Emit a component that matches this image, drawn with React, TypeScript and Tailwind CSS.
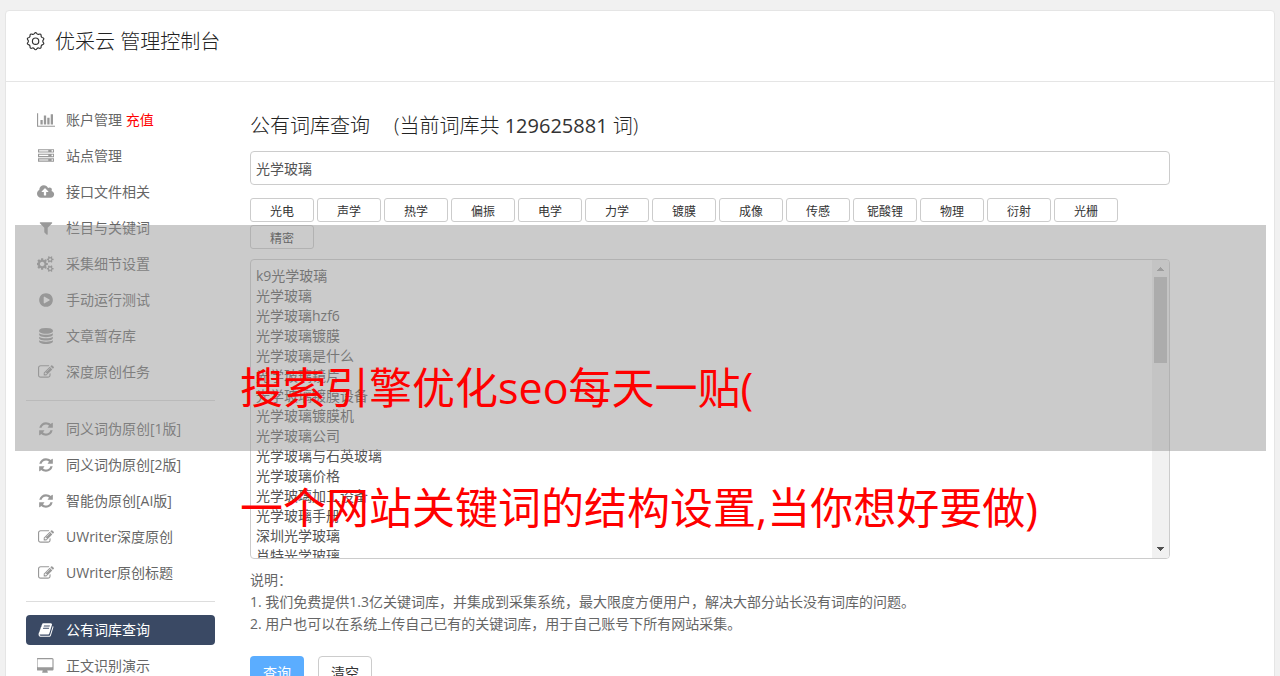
import React from 'react';

type IconDef = { w: number; d: string };

const icons: Record<string, IconDef> = {
  chart: { w: 2048, d: 'M640 896v512h-256v-512h256zm384-512v1024h-256v-1024h256zm1024 1152v128h-2048v-1536h128v1408h1920zm-640-896v768h-256v-768h256zm384-384v1152h-256v-1152h256z' },
  server: { w: 1792, d: 'M128 1408h1024v-128h-1024v128zm0-512h1024v-128h-1024v128zm1568 448q0-40-28-68t-68-28-68 28-28 68 28 68 68 28 68-28 28-68zm-1568-960h1024v-128h-1024v128zm1568 448q0-40-28-68t-68-28-68 28-28 68 28 68 68 28 68-28 28-68zm0-512q0-40-28-68t-68-28-68 28-28 68 28 68 68 28 68-28 28-68zm96 832v384h-1792v-384h1792zm0-512v384h-1792v-384h1792zm0-512v384h-1792v-384h1792z' },
  cloud: { w: 1920, d: 'M1280 864q0-14-9-23l-352-352q-9-9-23-9t-23 9l-351 351q-10 12-10 24 0 14 9 23t23 9h224v352q0 13 9.5 22.5t22.5 9.5h192q13 0 22.5-9.5t9.5-22.5v-352h224q13 0 22.5-9.5t9.5-22.5zm640 288q0 159-112.5 271.5t-271.5 112.5h-1088q-185 0-316.5-131.5t-131.5-316.5q0-130 70-240t188-165q-2-30-2-43 0-212 150-362t362-150q156 0 285.5 87t188.5 231q71-62 166-62 106 0 181 75t75 181q0 76-41 138 130 31 213.5 135.5t83.5 238.5z' },
  filter: { w: 1792, d: 'M1595 295q17 41-14 70l-493 493v742q0 42-39 59-13 5-25 5-27 0-45-19l-256-256q-19-19-19-45v-486l-493-493q-31-29-14-70 17-39 59-39h1280q42 0 59 39z' },
  cogs: { w: 1920, d: 'M832 896q0-106-75-181t-181-75-181 75-75 181 75 181 181 75 181-75 75-181zm768 512q0-52-38-90t-90-38-90 38-38 90q0 53 37.5 90.5t90.5 37.5 90.5-37.5 37.5-90.5zm0-1024q0-52-38-90t-90-38-90 38-38 90q0 53 37.5 90.5t90.5 37.5 90.5-37.5 37.5-90.5zm-384 421v185q0 10-7 19.5t-16 10.5l-155 24q-11 35-32 76 34 48 90 115 7 11 7 20 0 12-7 19-23 30-82.5 89.5t-78.5 59.5q-11 0-21-7l-115-90q-37 19-77 31-11 108-23 155-7 24-30 24h-186q-11 0-20-7.5t-10-17.5l-23-153q-34-10-75-31l-118 89q-7 7-20 7-11 0-21-8-144-133-144-160 0-9 7-19 10-14 41-53t47-61q-23-44-35-82l-152-24q-10-1-17-9.5t-7-19.5v-185q0-10 7-19.5t16-10.5l155-24q11-35 32-76-34-48-90-115-7-11-7-20 0-12 7-20 22-30 82-89t79-59q11 0 21 7l115 90q34-18 77-32 11-108 23-154 7-24 30-24h186q11 0 20 7.5t10 17.5l23 153q34 10 75 31l118-89q8-7 20-7 11 0 21 8 144 133 144 160 0 8-7 19-12 16-42 54t-45 60q23 48 34 82l152 23q10 2 17 10.5t7 19.5zm640 533v140q0 16-149 31-12 27-30 52 51 113 51 138 0 4-4 7-122 71-124 71-8 0-46-47t-52-68q-20 2-30 2t-30-2q-14 21-52 68t-46 47q-2 0-124-71-4-3-4-7 0-25 51-138-18-25-30-52-149-15-149-31v-140q0-16 149-31 13-29 30-52-51-113-51-138 0-4 4-7 4-2 35-20t59-34 30-16q8 0 46 46.5t52 67.5q20-2 30-2t30 2q51-71 92-112l6-2q4 0 124 70 4 3 4 7 0 25-51 138 17 23 30 52 149 15 149 31zm0-1024v140q0 16-149 31-12 27-30 52 51 113 51 138 0 4-4 7-122 71-124 71-8 0-46-47t-52-68q-20 2-30 2t-30-2q-14 21-52 68t-46 47q-2 0-124-71-4-3-4-7 0-25 51-138-18-25-30-52-149-15-149-31v-140q0-16 149-31 13-29 30-52-51-113-51-138 0-4 4-7 4-2 35-20t59-34 30-16q8 0 46 46.5t52 67.5q20-2 30-2t30 2q51-71 92-112l6-2q4 0 124 70 4 3 4 7 0 25-51 138 17 23 30 52 149 15 149 31z' },
  play: { w: 1792, d: 'M1312 896q0 37-32 55l-544 320q-15 9-32 9-16 0-32-8-32-19-32-56v-640q0-37 32-56 33-18 64 1l544 320q32 18 32 55zm352 0q0-209-103-385.5t-279.5-279.5-385.5-103-385.5 103-279.5 279.5-103 385.5 103 385.5 279.5 279.5 385.5 103 385.5-103 279.5-279.5 103-385.5z' },
  database: { w: 1792, d: 'M896 768q237 0 443-43t325-127v170q0 69-103 128t-280 93.5-385 34.5-385-34.5-280-93.5-103-128v-170q119 84 325 127t443 43zm0 768q237 0 443-43t325-127v170q0 69-103 128t-280 93.5-385 34.5-385-34.5-280-93.5-103-128v-170q119 84 325 127t443 43zm0-384q237 0 443-43t325-127v170q0 69-103 128t-280 93.5-385 34.5-385-34.5-280-93.5-103-128v-170q119 84 325 127t443 43zm0-1152q208 0 385 34.5t280 93.5 103 128v128q0 69-103 128t-280 93.5-385 34.5-385-34.5-280-93.5-103-128v-128q0-69 103-128t280-93.5 385-34.5z' },
  edit: { w: 1792, d: 'M888 1184l116-116-152-152-116 116v56h96v96h56zm440-720q-16-16-33 1l-350 350q-17 17-1 33t33-1l350-350q17-17 1-33zm80 594v190q0 119-84.5 203.5t-203.5 84.5h-832q-119 0-203.5-84.5t-84.5-203.5v-832q0-119 84.5-203.5t203.5-84.5h832q63 0 117 25 15 7 18 23 3 17-9 29l-49 49q-14 14-32 8-23-6-45-6h-832q-66 0-113 47t-47 113v832q0 66 47 113t113 47h832q66 0 113-47t47-113v-126q0-13 9-22l64-64q15-15 35-7t20 29zm-96-738l288 288-672 672h-288v-288zm444 132l-92 92-288-288 92-92q28-28 68-28t68 28l152 152q28 28 28 68t-28 68z' },
  refresh: { w: 1792, d: 'M1639 1056q0 5-1 7-64 268-268 434.5t-478 166.5q-146 0-282.5-55t-243.5-157l-129 129q-19 19-45 19t-45-19-19-45v-448q0-26 19-45t45-19h448q26 0 45 19t19 45-19 45l-137 137q71 66 161 102t187 36q134 0 250-65t186-179q11-17 53-117 8-23 30-23h192q13 0 22.5 9.5t9.5 22.5zm25-800v448q0 26-19 45t-45 19h-448q-26 0-45-19t-19-45 19-45l138-138q-148-137-349-137-134 0-250 65t-186 179q-11 17-53 117-8 23-30 23h-199q-13 0-22.5-9.5t-9.5-22.5v-7q65-268 270-434.5t480-166.5q146 0 284 55.5t245 156.5l130-129q19-19 45-19t45 19 19 45z' },
  book: { w: 1792, d: 'M1703 478q40 57 18 129l-275 906q-19 64-76.5 107.5t-122.5 43.5h-923q-77 0-148.5-53.5t-99.5-131.5q-24-67-2-127 0-4 3-27t4-37q1-8-3-21.5t-3-19.5q2-11 8-21t16.5-23.5 16.5-23.5q23-38 45-91.5t30-91.5q3-10 .5-30t-.5-28q3-11 17-28t17-23q21-36 42-92t25-90q1-9-2.5-32t.5-28q4-13 22-30.5t22-22.5q19-26 42.5-84.5t27.5-96.5q1-8-3-25.5t-2-26.5q2-8 9-18t18-23 17-21q8-12 16.5-30.5t15-35 16-36 19.5-32 26.5-23.5 36-11.5 47.5 5.5l-1 3q38-9 51-9h761q74 0 114 56t18 130l-274 906q-36 119-71.5 153.5t-128.5 34.5h-869q-27 0-38 15-11 16-1 43 24 70 144 70h923q29 0 56-15.5t35-41.5l300-987q7-22 5-57 38 15 59 43zm-1064 2q-4 13 2 22.5t20 9.5h608q13 0 25.5-9.5t16.5-22.5l21-64q4-13-2-22.5t-20-9.5h-608q-13 0-25.5 9.5t-16.5 22.5zm-83 256q-4 13 2 22.5t20 9.5h608q13 0 25.5-9.5t16.5-22.5l21-64q4-13-2-22.5t-20-9.5h-608q-13 0-25.5 9.5t-16.5 22.5z' },
  desktop: { w: 1920, d: 'M1728 992v-832q0-13-9.5-22.5t-22.5-9.5h-1600q-13 0-22.5 9.5t-9.5 22.5v832q0 13 9.5 22.5t22.5 9.5h1600q13 0 22.5-9.5t9.5-22.5zm128-832v1088q0 66-47 113t-113 47h-544q0 37 16 77.5t32 71 16 43.5q0 26-19 45t-45 19h-512q-26 0-45-19t-19-45q0-14 16-44t32-70 16-78h-544q-66 0-113-47t-47-113v-1088q0-66 47-113t113-47h1600q66 0 113 47t47 113z' },
};

function Icon({ name }: { name: string }) {
  const icon = icons[name];
  return (
    <span className="flex w-5 shrink-0 justify-center">
      <svg viewBox={`0 0 ${icon.w} 1792`} className="h-4 w-auto" fill="currentColor" aria-hidden="true">
        <path d={icon.d} />
      </svg>
    </span>
  );
}

type Item = { icon: string; label: string; extra?: string; active?: boolean };

const groups: Item[][] = [
  [
    { icon: 'chart', label: '账户管理', extra: '充值' },
    { icon: 'server', label: '站点管理' },
    { icon: 'cloud', label: '接口文件相关' },
    { icon: 'filter', label: '栏目与关键词' },
    { icon: 'cogs', label: '采集细节设置' },
    { icon: 'play', label: '手动运行测试' },
    { icon: 'database', label: '文章暂存库' },
    { icon: 'edit', label: '深度原创任务' },
  ],
  [
    { icon: 'refresh', label: '同义词伪原创[1版]' },
    { icon: 'refresh', label: '同义词伪原创[2版]' },
    { icon: 'refresh', label: '智能伪原创[AI版]' },
    { icon: 'edit', label: 'UWriter深度原创' },
    { icon: 'edit', label: 'UWriter原创标题' },
  ],
  [
    { icon: 'book', label: '公有词库查询', active: true },
    { icon: 'desktop', label: '正文识别演示' },
  ],
];

const tags = ['光电', '声学', '热学', '偏振', '电学', '力学', '镀膜', '成像', '传感', '铌酸锂', '物理', '衍射', '光栅', '精密'];

const results = [
  'k9光学玻璃', '光学玻璃', '光学玻璃hzf6', '光学玻璃镀膜', '光学玻璃是什么', '光学玻璃镜片', '光学玻璃镀膜设备',
  '光学玻璃镀膜机', '光学玻璃公司', '光学玻璃与石英玻璃', '光学玻璃价格', '光学玻璃加工设备', '光学玻璃手册',
  '深圳光学玻璃', '肖特光学玻璃',
].join('\n');

function GearIcon() {
  const points: string[] = [];
  for (let i = 0; i < 10; i++) {
    const a = (i * Math.PI) / 5 - Math.PI / 2;
    const at = (r: number, t: number) => `${(11.5 + r * Math.cos(t)).toFixed(2)} ${(11 + r * Math.sin(t)).toFixed(2)}`;
    points.push(`${i ? 'L' : 'M'}${at(9, a - 0.2)}Q${at(11.8, a)} ${at(9, a + 0.2)}Q${at(8.4, a + 0.314)} ${at(9, a + 0.428)}`);
  }
  return (
    <svg viewBox="0 0 24 24" className="size-5" fill="none" stroke="currentColor" strokeWidth="1.4" aria-hidden="true">
      <path d={points.join('') + 'Z'} />
      <circle cx="11.5" cy="11" r="3.8" />
    </svg>
  );
}

function Sidebar() {
  return (
    <nav className="w-[189px] shrink-0">
      {groups.map((group, g) => (
        <ul key={g} className={g ? 'mt-[13px] flex flex-col gap-1.5 border-t border-[#ddd] pt-[13px]' : 'flex flex-col gap-1.5'}>
          {group.map((item) => (
            <li key={item.label}>
              <a
                href="#"
                className={
                  item.active
                    ? 'flex h-[30px] items-center gap-2.5 rounded bg-[#3a4964] px-2.5 text-white'
                    : 'flex h-[30px] items-center gap-2.5 px-2.5 text-[#999]'
                }
              >
                <Icon name={item.icon} />
                <span className={item.active ? 'text-white' : 'text-[#666]'}>
                  {item.label}
                  {item.extra && <span className="text-[#f00]"> {item.extra}</span>}
                </span>
              </a>
            </li>
          ))}
        </ul>
      ))}
    </nav>
  );
}

function ResultBox() {
  return (
    <div className="mt-2.5 flex h-[300px] overflow-hidden rounded border border-[#ccc]">
      <textarea
        aria-label="查询结果"
        className="block flex-1 resize-none overflow-hidden px-[5px] py-1.5 leading-5 text-[#555] outline-none"
        defaultValue={results}
      />
      <div className="flex w-[17px] flex-col items-center justify-between bg-[#f1f1f1]" aria-hidden="true">
        <div className="flex flex-col items-center">
          <svg viewBox="0 0 17 17" className="size-[17px]" fill="#a3a3a3">
            <path d="M8 7h1v1h1v1h1v1h1v1H5v-1h1V9h1V8h1z" />
          </svg>
          <div className="h-[86px] w-[13px] bg-[#c1c1c1]" />
        </div>
        <svg viewBox="0 0 17 17" className="size-[17px]" fill="#505050">
          <path d="M5 6h7v1h-1v1h-1v1H9v1H8V9H7V8H6V7H5z" />
        </svg>
      </div>
    </div>
  );
}

export default function App() {
  return (
    <div className="relative h-screen overflow-hidden bg-[#f1f1f1] px-[5px] pt-2.5 font-['Open_Sans','Noto_Sans_CJK_SC',sans-serif] text-sm text-[#666]">
      <div className="rounded border border-[#e5e5e5] bg-white">
        <header className="flex h-[71px] items-center gap-[9px] border-b border-[#e5e5e5] px-5 pb-2 text-[#333]">
          <GearIcon />
          <h1 className="text-xl font-light text-[#222]">优采云 管理控制台</h1>
        </header>
        <div className="flex gap-[35px] px-5 pt-[23px]">
          <Sidebar />
          <main className="min-w-0 flex-1 pr-[84px]">
            <h2 className="flex h-[46px] items-center gap-6 pb-1 text-xl font-light text-[#222]">
              <span>公有词库查询</span>
              <span>
                (当前词库共 <span className="font-normal text-[#333]">129625881</span> 词)
              </span>
            </h2>
            <input
              aria-label="关键词"
              className="block h-[34px] w-full rounded border border-[#ccc] px-[5px] text-[#555] outline-none"
              defaultValue="光学玻璃"
            />
            <div className="mt-[13px] flex flex-wrap gap-[3px]">
              {tags.map((tag) => (
                <button key={tag} type="button" className="h-6 w-16 rounded-[3px] border border-[#ccc] pt-1 text-xs leading-4 text-[#333]">
                  {tag}
                </button>
              ))}
            </div>
            <ResultBox />
            <div className="mt-2.5 leading-[22px]">
              <p>说明：</p>
              <p>1. 我们免费提供1.3亿关键词库，并集成到采集系统，最大限度方便用户，解决大部分站长没有词库的问题。</p>
              <p>2. 用户也可以在系统上传自己已有的关键词库，用于自己账号下所有网站采集。</p>
            </div>
            <div className="mt-[21px] flex gap-3.5">
              <button type="button" className="h-[34px] w-[54px] rounded bg-[#5badff] text-white">查询</button>
              <button type="button" className="h-[34px] w-[54px] rounded border border-[#ccc] text-[#333]">清空</button>
            </div>
          </main>
        </div>
      </div>
      <div className="pointer-events-none absolute top-[225px] right-3.5 left-[15px] h-[226px] bg-[#979797]/50" />
      <div className="pointer-events-none absolute top-[328px] left-[240px] text-[43px] leading-[120px] text-[#f00]">
        <p>搜索引擎优化seo每天一贴(</p>
        <p>一个网站关键词的结构设置,当你想好要做)</p>
      </div>
    </div>
  );
}
